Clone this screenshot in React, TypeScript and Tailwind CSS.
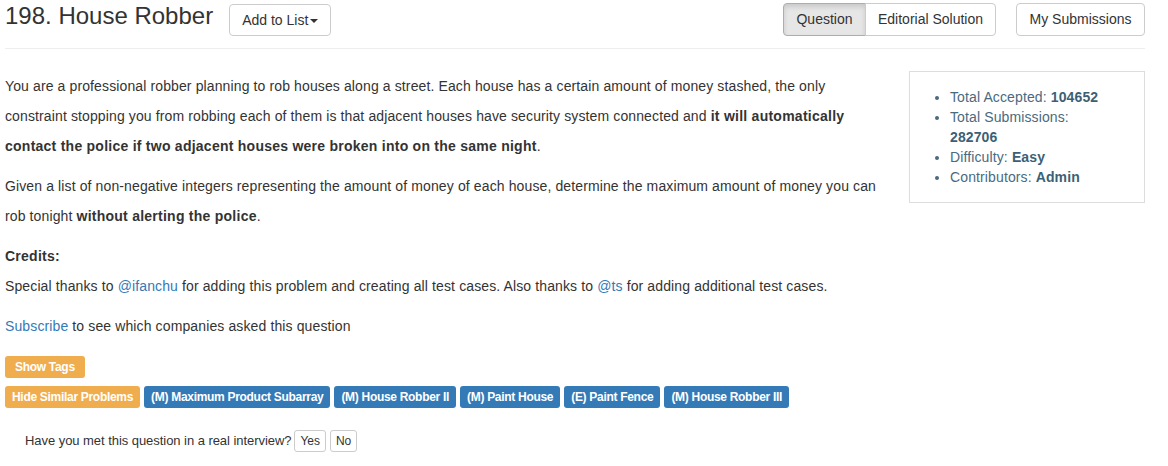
import React from "react";

const font = "font-['Liberation_Sans',Arial,sans-serif]";

function Caret() {
  return (
    <span className="inline-block ml-[2px] align-middle w-0 h-0 border-t-[4px] border-t-[#333] border-x-[4px] border-x-transparent" />
  );
}

function Tag({
  children,
  color,
  wide,
}: {
  children: React.ReactNode;
  color: "orange" | "blue";
  wide?: boolean;
}) {
  return (
    <span
      className={
        "inline-flex items-center h-[22px] rounded-[3px] text-[12px] font-bold text-white whitespace-nowrap tracking-[-0.3px] " +
        (wide ? "px-[10px] " : "px-[7px] ") +
        (color === "orange" ? "bg-[#f0ad4e]" : "bg-[#337ab7]")
      }
    >
      {children}
    </span>
  );
}

export default function App() {
  const similar = [
    "(M) Maximum Product Subarray",
    "(M) House Robber II",
    "(M) Paint House",
    "(E) Paint Fence",
    "(M) House Robber III",
  ];

  return (
    <div className={`${font} w-[1168px] h-[466px] bg-white text-[#333] text-[14px] overflow-hidden`}>
      <div className="w-[1140px] ml-[5px]">
        {/* header */}
        <div className="flex items-start h-[49px] border-b border-[#eee]">
          <h1 className="text-[24px] leading-[32px] text-[#333]">198. House Robber</h1>
          <button className="ml-[16px] mt-[4px] h-[32px] px-[12px] border border-[#ccc] rounded-[4px] bg-white text-[14px] text-[#333]">
            Add to List<Caret />
          </button>
          <div className="ml-auto mt-[3px] flex">
            <button className="h-[33px] w-[83px] border border-[#adadad] rounded-l-[4px] bg-[#e6e6e6] shadow-[inset_0_3px_5px_rgba(0,0,0,0.125)] text-[14px] text-[#333]">
              Question
            </button>
            <button className="h-[33px] w-[131px] -ml-px border border-[#ccc] rounded-r-[4px] bg-white text-[14px] text-[#333]">
              Editorial Solution
            </button>
            <button className="ml-[20px] h-[33px] w-[129px] border border-[#ccc] rounded-[4px] bg-white text-[14px] text-[#333]">
              My Submissions
            </button>
          </div>
        </div>

        {/* body */}
        <div className="flex mt-[22px]">
          <div className="w-[884px] shrink-0">
            <div className="tracking-[0.12px]">
              <p className="leading-[30px] mb-[10px]">
                You are a professional robber planning to rob houses along a street. Each house has a certain amount of
                money stashed, the only constraint stopping you from robbing each of them is that adjacent houses have
                security system connected and{" "}
                <b className="tracking-[0.25px]">
                  it will automatically contact the police if two adjacent houses were broken into on the same night
                </b>
                .
              </p>
              <p className="leading-[30px] mb-[10px]">
                Given a list of non-negative integers representing the amount of money of each house, determine the
                maximum amount of money you can rob tonight <b className="tracking-[0.25px]">without alerting the police</b>.
              </p>
              <p className="leading-[30px] mb-[10px]">
                <b className="tracking-[0.25px]">Credits:</b>
                <br />
                Special thanks to <a className="text-[#337ab7]">@ifanchu</a> for adding this problem and creating all
                test cases. Also thanks to <a className="text-[#337ab7]">@ts</a> for adding additional test cases.
              </p>
              <p className="leading-[30px]">
                <a className="text-[#337ab7]">Subscribe</a> to see which companies asked this question
              </p>
            </div>

            <div className="mt-[15px]">
              <Tag color="orange" wide>
                Show Tags
              </Tag>
            </div>
            <div className="mt-[8px] flex gap-[4px]">
              <Tag color="orange">Hide Similar Problems</Tag>
              {similar.map((s) => (
                <Tag key={s} color="blue">
                  {s}
                </Tag>
              ))}
            </div>

            <div className="mt-[22px] ml-[20px] flex items-center text-[13px] tracking-[-0.05px]">
              <span>Have you met this question in a real interview?</span>
              <button className="ml-[3px] h-[22px] px-[5px] border border-[#ccc] rounded-[3px] bg-white text-[12px] text-[#333]">
                Yes
              </button>
              <button className="ml-[4px] h-[22px] px-[5px] border border-[#ccc] rounded-[3px] bg-white text-[12px] text-[#333]">
                No
              </button>
            </div>
          </div>

          <div className="ml-[20px] w-[236px] h-[132px] border border-[#ddd] pt-[15px] pl-[15px] pr-[35px]">
            <ul className="list-disc pl-[25px] leading-[20px] text-[#4a6a80] tracking-[0.12px]">
              <li>
                Total Accepted: <b className="text-[#3d5f75]">104652</b>
              </li>
              <li>
                Total Submissions: <b className="text-[#3d5f75]">282706</b>
              </li>
              <li>
                Difficulty: <b className="text-[#3d5f75]">Easy</b>
              </li>
              <li>
                Contributors: <b className="text-[#3d5f75]">Admin</b>
              </li>
            </ul>
          </div>
        </div>
      </div>
    </div>
  );
}
